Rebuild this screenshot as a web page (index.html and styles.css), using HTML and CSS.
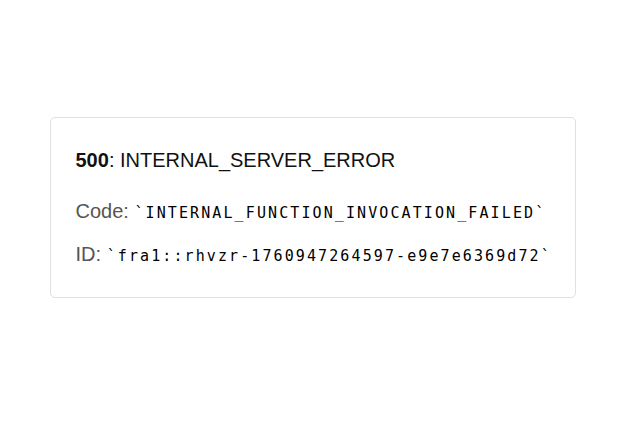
FILE: index.html
```html
<!DOCTYPE html>
<html lang="en">
<head>
    <meta charset="UTF-8">
    <meta name="viewport" content="width=device-width, initial-scale=1.0">
    <title>500: INTERNAL_SERVER_ERROR</title>
    <link rel="stylesheet" href="styles.css">
</head>
<body>
    <main class="error-box">
        <p class="title"><strong>500</strong>: INTERNAL_SERVER_ERROR</p>
        <div class="details">
            <p class="detail">Code: <code>`INTERNAL_FUNCTION_INVOCATION_FAILED`</code></p>
            <p class="detail">ID: <code>`fra1::rhvzr-1760947264597-e9e7e6369d72`</code></p>
        </div>
    </main>
</body>
</html>
```

FILE: styles.css
```css
html, body { height: 100%; }
body {
    margin: 0;
    font-family: Arial, 'Liberation Sans', sans-serif;
    color: #111;
    background: #fff;
    display: flex;
    align-items: center;
    justify-content: center;
}
.error-box {
    width: 474px;
    margin: -19px 0 0 1px;
    padding: 15px 25px 21px;
    border: 1px solid #e0e0e0;
    border-radius: 5px;
}
p { margin: 0; }
.title {
    font-size: 20px;
    line-height: 54px;
    color: #111;
}
.details { padding-top: 3px; }
.detail {
    font-size: 20px;
    line-height: 43px;
    color: #555;
    white-space: nowrap;
}
code {
    font-family: 'DejaVu Sans Mono', monospace;
    font-size: 15px;
    line-height: 1;
    letter-spacing: 2.1px;
    color: #000;
}
```
